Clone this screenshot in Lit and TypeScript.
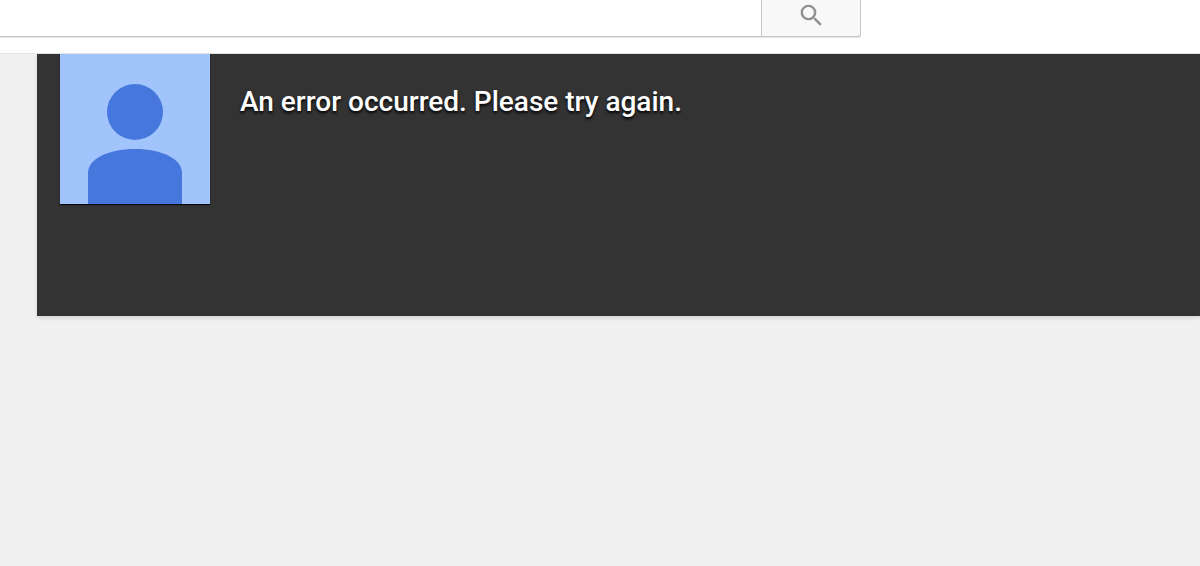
import { LitElement, html, css } from "lit";
import { customElement } from "lit/decorators.js";

@customElement("app-root")
export class AppRoot extends LitElement {
  static styles = css`
    :host {
      display: block;
      min-height: 100vh;
      background: #f0f0f0;
      font-family: Roboto, "Liberation Sans", sans-serif;
    }
    .masthead {
      background: #fff;
      border-bottom: 1px solid #e6e6e6;
      padding-bottom: 16px;
    }
    .search {
      display: flex;
      height: 37px;
      margin-right: 339px;
    }
    .field {
      flex: 1;
      min-width: 0;
      box-sizing: border-box;
      border: 0;
      border-bottom: 1px solid #c8c8c8;
      background: #fff;
      padding: 0 12px;
      margin: 0;
      font: 24px Roboto, sans-serif;
      outline: none;
      box-shadow: 0 1px 0 #e4e4e4;
    }
    .submit {
      box-sizing: border-box;
      width: 100px;
      margin: 0;
      padding: 0 0 5px;
      display: flex;
      align-items: center;
      justify-content: center;
      background: #f8f8f8;
      border: 1px solid #c8c8c8;
      border-top: 0;
      border-radius: 0 0 3px 0;
      box-shadow: 0 1px 0 #e4e4e4;
    }
    .submit svg {
      display: block;
      width: 29px;
      height: 29px;
      fill: #919191;
    }
    .banner {
      display: flex;
      align-items: flex-start;
      gap: 30px;
      min-height: 262px;
      box-sizing: border-box;
      margin-left: 37px;
      padding-left: 23px;
      background: #333;
      box-shadow: 0 2px 4px rgba(0, 0, 0, 0.12);
    }
    .avatar {
      display: block;
      flex: none;
      width: 150px;
      height: 150px;
      box-shadow: 0 1px 1px rgba(0, 0, 0, 0.8);
    }
    .message {
      margin: 0;
      padding-top: 30px;
      color: #fff;
      font-size: 28px;
      line-height: 36px;
      font-weight: 500;
      text-shadow: 0 2px 3px #000;
    }
  `;

  render() {
    return html`
      <header class="masthead">
        <form class="search" role="search" @submit=${(e: Event) => e.preventDefault()}>
          <input class="field" type="text" aria-label="Search" />
          <button class="submit" type="submit" aria-label="Search">
            <svg viewBox="0 0 24 24" aria-hidden="true">
              <path
                d="M15.5 14h-.79l-.28-.27A6.47 6.47 0 0 0 16 9.5 6.5 6.5 0 1 0 9.5 16c1.61 0 3.09-.59 4.23-1.57l.27.28v.79l5 4.99L20.49 19l-4.99-5zm-6 0C7.01 14 5 11.99 5 9.5S7.01 5 9.5 5 14 7.01 14 9.5 11.99 14 9.5 14z"
              />
            </svg>
          </button>
        </form>
      </header>
      <main class="banner">
        <svg class="avatar" viewBox="0 0 150 150" aria-hidden="true">
          <rect width="150" height="150" fill="#a1c4fd" />
          <circle cx="75" cy="58" r="28" fill="#4577dc" />
          <path d="M28 150V119C28 105 48 95 75 95S122 105 122 119V150Z" fill="#4577dc" />
        </svg>
        <h1 class="message">An error occurred. Please try again.</h1>
      </main>
    `;
  }
}
